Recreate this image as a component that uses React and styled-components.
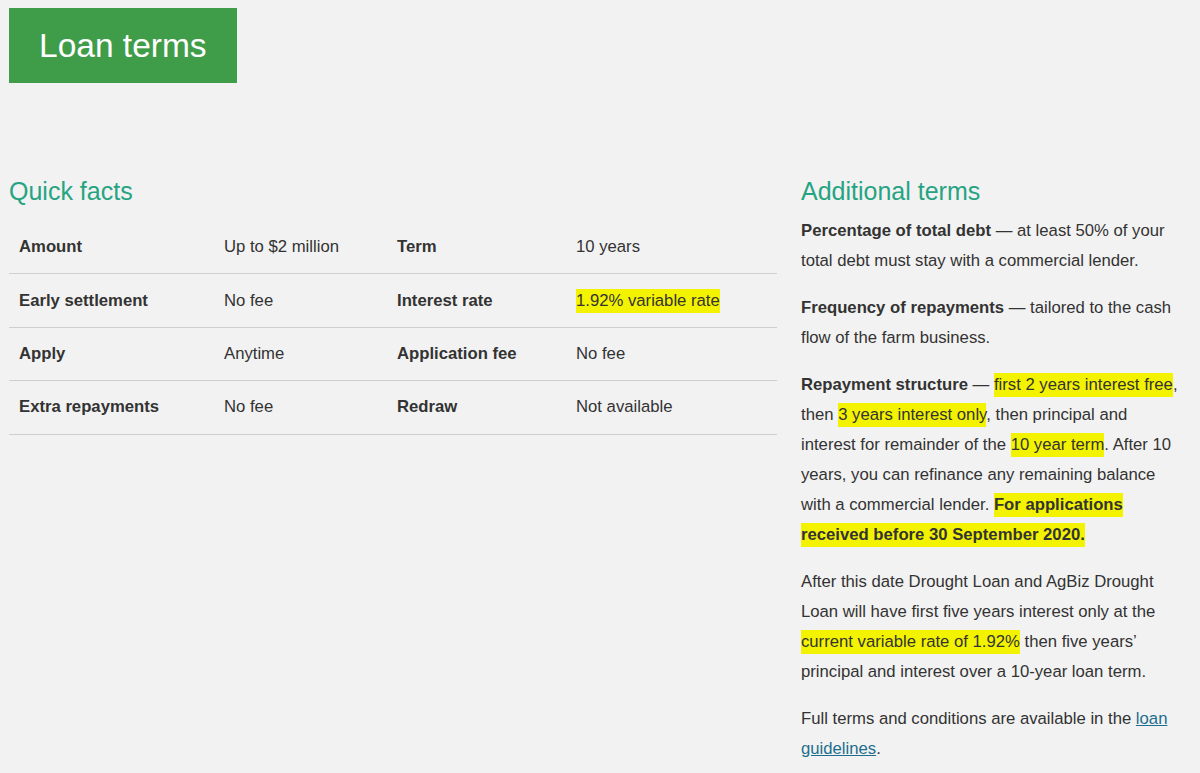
import React from "react";
import styled, { createGlobalStyle } from "styled-components";

const Global = createGlobalStyle`
  html, body { margin: 0; padding: 0; background: #f2f2f2; }
  body { font-family: "Liberation Sans", Arial, sans-serif; color: #333; }
  * { box-sizing: border-box; }
`;

const Page = styled.div`
  padding: 8px 9px 0 9px;
  width: 1200px;
  height: 773px;
  overflow: hidden;
  background: #f2f2f2;
`;

const Banner = styled.div`
  display: inline-flex;
  align-items: center;
  height: 75px;
  padding: 0 30px;
  background: #3f9d4a;
  color: #fff;
  font-size: 33.5px;
  line-height: 1;
`;

const Columns = styled.div`
  display: flex;
  align-items: flex-start;
  gap: 24px;
  margin-top: 94px;
`;

const Left = styled.section`
  width: 768px;
  flex: none;
`;

const Right = styled.section`
  width: 379px;
  flex: none;
`;

const Heading = styled.h2`
  margin: 0;
  font-weight: normal;
  font-size: 25px;
  line-height: 29px;
  color: #26a482;
`;

const Table = styled.div`
  margin-top: 15px;
`;

const Row = styled.div`
  display: grid;
  grid-template-columns: 205px 173px 179px 211px;
  align-items: center;
  height: 53.4px;
  border-bottom: 1px solid #cfcfcf;
`;

const Cell = styled.div`
  padding-left: 10px;
  font-size: 16.7px;
  line-height: 20px;
  font-weight: ${(p) => (p.$bold ? "bold" : "normal")};
  color: #333;
  white-space: nowrap;
`;

const Para = styled.p`
  margin: 10px 0 17px;
  font-size: 16.7px;
  line-height: 30px;
  color: #333;
  & + & { margin-top: 0; }
`;

const Mark = styled.span`
  background: #f3f300;
  padding: 2px 0 3px;
  -webkit-box-decoration-break: clone;
  box-decoration-break: clone;
`;

const Link = styled.a`
  color: #1d6e8e;
  text-decoration: underline;
`;

const rows = [
  ["Amount", "Up to $2 million", "Term", "10 years"],
  ["Early settlement", "No fee", "Interest rate", <Mark>1.92% variable rate</Mark>],
  ["Apply", "Anytime", "Application fee", "No fee"],
  ["Extra repayments", "No fee", "Redraw", "Not available"],
];

export default function App() {
  return (
    <Page>
      <Global />
      <Banner>Loan terms</Banner>
      <Columns>
        <Left>
          <Heading>Quick facts</Heading>
          <Table>
            {rows.map((r, i) => (
              <Row key={i}>
                <Cell $bold>{r[0]}</Cell>
                <Cell>{r[1]}</Cell>
                <Cell $bold>{r[2]}</Cell>
                <Cell>{r[3]}</Cell>
              </Row>
            ))}
          </Table>
        </Left>
        <Right>
          <Heading>Additional terms</Heading>
          <Para>
            <b>Percentage of total debt</b> — at least 50% of your total debt must stay with a
            commercial lender.
          </Para>
          <Para>
            <b>Frequency of repayments</b> — tailored to the cash flow of the farm business.
          </Para>
          <Para>
            <b>Repayment structure</b> — <Mark>first 2 years interest free</Mark>, then{" "}
            <Mark>3 years interest only</Mark>, then principal and interest for remainder of the{" "}
            <Mark>10 year term</Mark>. After 10 years, you can refinance any remaining balance
            with a commercial lender. <Mark><b>For applications received before 30 September 2020.</b></Mark>
          </Para>
          <Para>
            After this date Drought Loan and AgBiz Drought Loan will have first five years
            interest only at the <Mark>current variable rate of 1.92%</Mark> then five years’
            principal and interest over a 10-year loan term.
          </Para>
          <Para>
            Full terms and conditions are available in the <Link href="#">loan guidelines</Link>.
          </Para>
        </Right>
      </Columns>
    </Page>
  );
}
